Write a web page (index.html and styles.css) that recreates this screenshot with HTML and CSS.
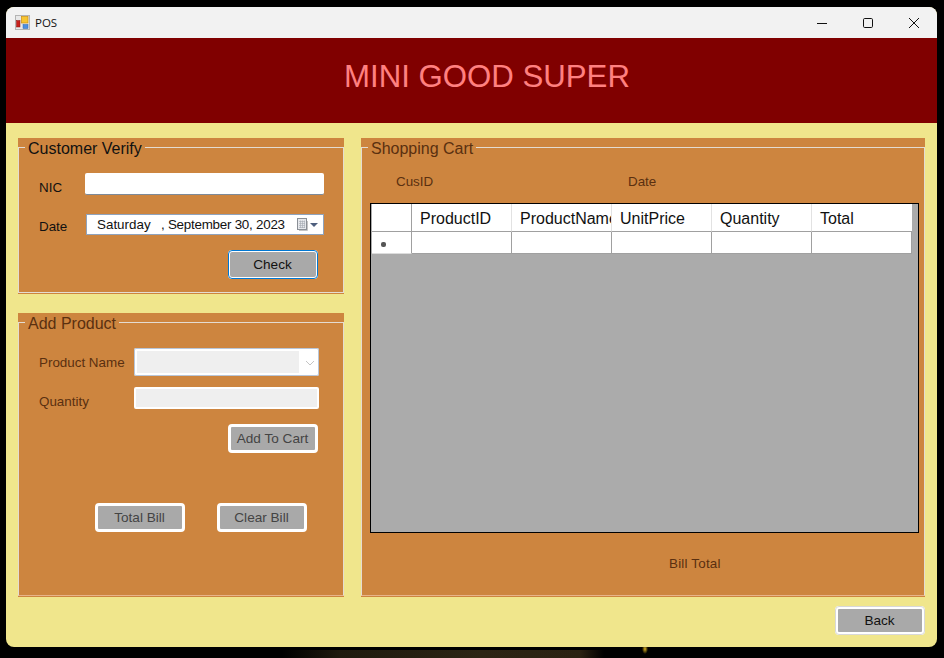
FILE: index.html
```html
<!DOCTYPE html>
<html lang="en">
<head>
  <meta charset="UTF-8">
  <meta name="viewport" content="width=device-width, initial-scale=1.0">
  <title>POS</title>
  <link rel="stylesheet" href="styles.css">
</head>
<body>

<div class="window">
  <div class="titlebar">
    <svg class="app-icon" width="15" height="15" viewBox="0 0 15 15">
      <rect x="0.5" y="0.5" width="14" height="14" fill="#e8e8e8" stroke="#b4b4b4"/>
      <rect x="6.5" y="1.5" width="6.5" height="6.5" fill="#f7c531" stroke="#c98f12" stroke-width="0.7"/>
      <rect x="1.5" y="5.5" width="3.5" height="6.5" fill="#c8201c" stroke="#8c1512" stroke-width="0.5"/>
      <rect x="8" y="9.5" width="5" height="4" fill="#4d8fe0" stroke="#2f66b0" stroke-width="0.5"/>
    </svg>
    <span class="app-name">POS</span>
    <div class="controls">
      <div class="control">
        <svg width="10" height="10" viewBox="0 0 10 10"><path d="M0 5.5H10" stroke="#111" fill="none"/></svg>
      </div>
      <div class="control">
        <svg width="10" height="10" viewBox="0 0 10 10"><rect x="0.5" y="0.5" width="9" height="9" rx="1.2" stroke="#111" fill="none"/></svg>
      </div>
      <div class="control">
        <svg width="10" height="10" viewBox="0 0 10 10"><path d="M0 0L10 10M10 0L0 10" stroke="#111" fill="none"/></svg>
      </div>
    </div>
  </div>

  <div class="banner">
    <h1>MINI GOOD SUPER</h1>
  </div>

  <div class="content">
    <div class="panels">
      <div class="left-col">
        <div class="group verify">
          <fieldset>
            <legend class="active">Customer Verify</legend>
            <div class="row">
              <label class="active nic-label nic-first">NIC</label>
              <input class="nic-input" type="text">
            </div>
            <div class="row date-row">
              <label class="active nic-label">Date</label>
              <div class="date-picker">
                <span class="date-day">Saturday</span>
                <span class="date-rest">, September 30, 2023</span>
                <svg class="cal-icon" width="11" height="13" viewBox="0 0 11 13">
                  <rect x="0.5" y="0.5" width="9" height="11" fill="#e6e8ec" stroke="#8a8f96"/>
                  <path d="M2 3.5H8M2 5.5H8M2 7.5H8M2 9.5H8M3.5 2.5V10M5.5 2.5V10M7.5 2.5V10" stroke="#a4a9b2" stroke-width="0.6"/>
                  <path d="M10.5 3V12.5H2" stroke="#c4c4c4" fill="none"/>
                </svg>
                <svg class="cal-arrow" width="8" height="4" viewBox="0 0 8 4"><path d="M0 0H8L4 4Z" fill="#4e5f7e"/></svg>
              </div>
            </div>
            <div class="actions">
              <button class="btn btn-focus" type="button">Check</button>
            </div>
          </fieldset>
        </div>

        <div class="group add-product">
          <fieldset>
            <legend>Add Product</legend>
            <div class="row">
              <label class="product-label">Product Name</label>
              <div class="combo">
                <div class="combo-field"></div>
                <svg width="17" height="22" viewBox="0 0 17 22"><path d="M7 10L11 14L15 10" stroke="#c4c4c4" fill="none"/></svg>
              </div>
            </div>
            <div class="row qty-row">
              <label class="product-label">Quantity</label>
              <input class="qty-input" type="text" disabled>
            </div>
            <div class="actions">
              <button class="btn" type="button">Add To Cart</button>
            </div>
            <div class="bill-actions">
              <button class="btn" type="button">Total Bill</button>
              <button class="btn" type="button">Clear Bill</button>
            </div>
          </fieldset>
        </div>
      </div>

      <div class="group cart">
        <fieldset>
          <legend>Shopping Cart</legend>
          <div class="cart-info">
            <span class="cus-id">CusID</span>
            <span>Date</span>
          </div>
          <div class="grid-box">
            <table>
              <thead>
                <tr>
                  <th class="row-head"></th>
                  <th>ProductID</th>
                  <th>ProductName</th>
                  <th>UnitPrice</th>
                  <th>Quantity</th>
                  <th>Total</th>
                </tr>
              </thead>
              <tbody>
                <tr>
                  <td class="row-head"><span class="new-row"></span></td>
                  <td></td>
                  <td></td>
                  <td></td>
                  <td></td>
                  <td></td>
                </tr>
              </tbody>
            </table>
          </div>
          <div class="bill-total">Bill Total</div>
        </fieldset>
      </div>
    </div>

    <div class="footer">
      <button class="btn btn-active" type="button">Back</button>
    </div>
  </div>
</div>

<div class="wallpaper"></div>

</body>
</html>
```

FILE: styles.css
```css
/* Screen behind the form */
html,
body {
  height: 100%;
}

body {
  margin: 0;
  background-color: #000;
  font-family: "Liberation Sans", Arial, sans-serif;
  overflow: hidden;
}

.wallpaper {
  height: 11px;
  background:
    radial-gradient(ellipse 3px 5px at 645px 2px, #d8b020, transparent),
    linear-gradient(90deg, #000 282px, #1e1a0e 340px, #2c2414 480px, #2a2212 580px, #000 604px) 0 3px no-repeat;
}

.window {
  width: 931px;
  height: 640px;
  margin: 7px 0 0 6px;
  border-radius: 8px;
  overflow: hidden;
  display: flex;
  flex-direction: column;
  background-color: #f0e68c;
}

/* Title bar */
.titlebar {
  height: 31px;
  display: flex;
  align-items: center;
  padding-left: 9px;
  background-color: #f2f2f2;
}

.app-icon {
  margin-right: 5px;
}

.app-name {
  font-family: "Open Sans", sans-serif;
  font-size: 11.5px;
  color: #111;
}

.controls {
  display: flex;
  margin-left: auto;
}

.control {
  width: 46px;
  height: 31px;
  display: flex;
  align-items: center;
  justify-content: center;
}

/* Header */
.banner {
  height: 85px;
  box-sizing: border-box;
  padding: 22px 0 0 338px;
  background-color: #800000;
}

.banner h1 {
  margin: 0;
  font-size: 31.2px;
  font-weight: normal;
  line-height: 34px;
  color: #ff8080;
}

/* Main area */
.content {
  flex: 1;
  padding: 15px 12px 0;
}

.panels {
  display: flex;
  gap: 17px;
  height: 459px;
}

.left-col {
  width: 326px;
  display: flex;
  flex-direction: column;
  gap: 19px;
}

.group {
  background-color: #cd853f;
  display: flex;
  padding-bottom: 1px;
  box-sizing: border-box;
}

.verify {
  height: 156px;
}

.add-product {
  height: 284px;
}

.cart {
  width: 564px;
}

fieldset {
  flex: 1;
  min-width: 0;
  margin: 0;
  padding: 16px 0 0;
  border: 1px solid #e4dcd2;
  border-bottom-color: #e9b48a;
  font-size: 13.4px;
  color: #5a3010;
}

.verify fieldset {
  border-bottom-color: #e4dcd2;
}

legend {
  height: 19px;
  margin-left: 6px;
  padding: 0 3px;
  font-size: 16px;
  line-height: 21px;
  color: #5a3010;
}

.active {
  color: #111;
}

.row {
  display: flex;
  padding-left: 20px;
}

.date-row {
  margin-top: 19px;
}

.qty-row {
  margin-top: 11px;
}

.nic-label {
  width: 46px;
  padding-top: 5px;
}

.nic-first {
  padding-top: 7px;
}

.product-label {
  width: 95px;
  padding-top: 7px;
}

.nic-input {
  width: 239px;
  height: 22px;
  box-sizing: border-box;
  padding: 0;
  border: none;
  border-bottom: 1px solid #7d8a99;
  border-radius: 2px;
  background-color: #fff;
}

.date-picker {
  width: 238px;
  height: 21px;
  margin-left: 1px;
  box-sizing: border-box;
  display: flex;
  align-items: center;
  padding-left: 10px;
  border: 1px solid #8fa3bd;
  background-color: #fff;
  color: #111;
}

.date-day {
  width: 64px;
}

.date-rest {
  width: 136px;
  letter-spacing: -0.25px;
}

.cal-arrow {
  margin-left: 2px;
}

.combo {
  width: 185px;
  height: 28px;
  box-sizing: border-box;
  display: flex;
  border: 3px solid #fff;
  outline: 1px solid #b9c6d8;
  outline-offset: -1px;
  border-radius: 2px;
  background-color: #fff;
}

.combo-field {
  flex: 1;
  background-color: #efefef;
}

.qty-input {
  width: 185px;
  height: 22px;
  box-sizing: border-box;
  padding: 0;
  border: 2px solid #fff;
  border-radius: 2px;
  background-color: #efefef;
}

.actions {
  display: flex;
  justify-content: flex-end;
  margin-top: 15px;
  padding-right: 25px;
}

.bill-actions {
  display: flex;
  gap: 32px;
  margin-top: 50px;
  padding-left: 76px;
}

.btn {
  width: 90px;
  height: 29px;
  box-sizing: border-box;
  padding: 0 1px 0 0;
  border: 3px solid #fff;
  border-radius: 4px;
  background-color: #a9a9a9;
  font-family: "Liberation Sans", Arial, sans-serif;
  font-size: 13.6px;
  color: #444;
}

.btn-focus {
  border: 2px solid #fff;
  outline: 1px solid #0078d4;
  outline-offset: -1px;
  color: #111;
}

.btn-active {
  color: #111;
  outline: 1px solid #d8d8d8;
  outline-offset: -1px;
}

/* Shopping cart */
.cart-info {
  display: flex;
  padding-left: 34px;
  line-height: 15px;
  margin-top: 1px;
}

.cus-id {
  width: 232px;
}

.grid-box {
  width: 549px;
  height: 330px;
  margin: 14px 0 0 8px;
  box-sizing: border-box;
  padding: 0 0 0 1px;
  border: 1px solid #000;
  background-color: #ababab;
}

table {
  width: 540px;
  table-layout: fixed;
  border-collapse: separate;
  border-spacing: 0;
  background-color: #fff;
}

th,
td {
  width: 100px;
  box-sizing: border-box;
  padding: 0;
  border-right: 1px solid #a0a0a0;
  border-bottom: 1px solid #a0a0a0;
}

th {
  height: 28px;
  padding-left: 8px;
  padding-top: 2px;
  overflow: hidden;
  white-space: nowrap;
  text-align: left;
  font-size: 16px;
  font-weight: normal;
  color: #111;
  border-right-color: #e2e2e2;
}

th:last-child {
  border-right: none;
}

td {
  height: 22px;
}

.row-head {
  width: 40px;
  border-right-color: #a0a0a0;
}

td.row-head {
  padding-left: 9px;
  line-height: 0;
  border-bottom-color: #dcdcdc;
}

.new-row {
  display: inline-block;
  width: 5px;
  height: 5px;
  margin-top: 4px;
  border-radius: 2px;
  background-color: #555;
}

.bill-total {
  margin-top: 23px;
  padding-left: 307px;
  line-height: 15px;
  letter-spacing: 0.2px;
}

.footer {
  display: flex;
  justify-content: flex-end;
  margin-top: 9px;
}
```
